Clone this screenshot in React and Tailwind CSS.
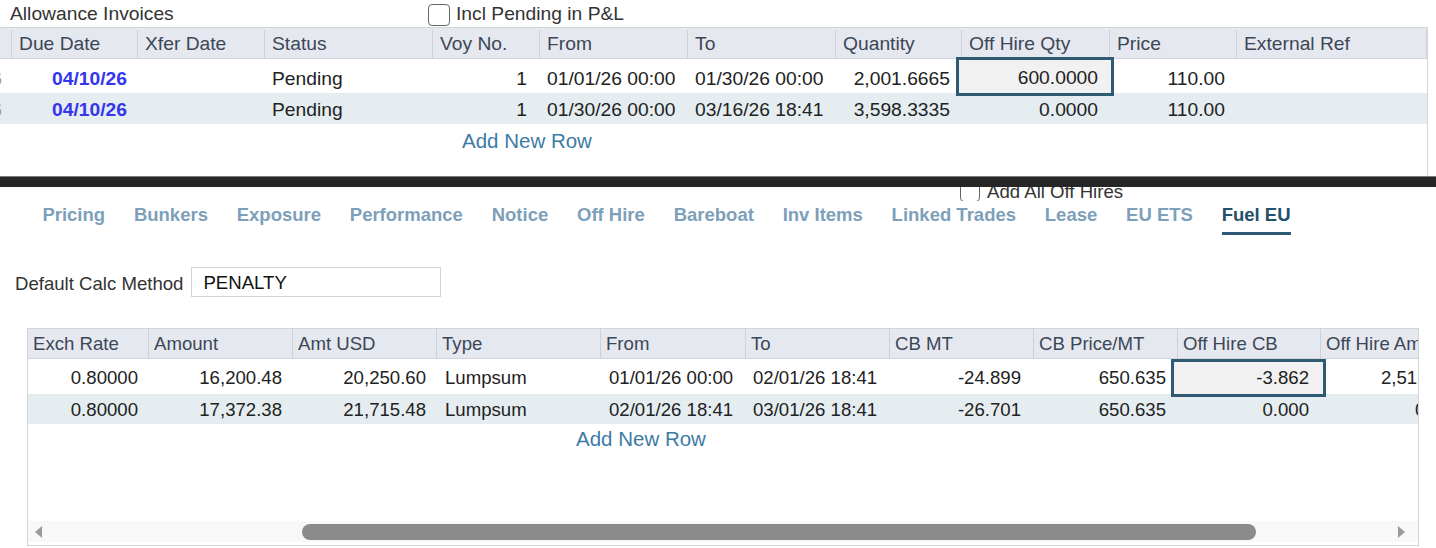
import React from "react";

const topCols = "grid-cols-[12px_126px_127px_168px_107px_148px_148px_126px_148px_127px_190px]";
const botCols = "grid-cols-[121px_144px_144px_164px_145px_144px_144px_144px_143px_150px]";

const topHeaders = ["", "Due Date", "Xfer Date", "Status", "Voy No.", "From", "To", "Quantity", "Off Hire Qty", "Price", "External Ref"];
const botHeaders = ["Exch Rate", "Amount", "Amt USD", "Type", "From", "To", "CB MT", "CB Price/MT", "Off Hire CB", "Off Hire Amount"];

const topRows = [
    { from: "01/01/26 00:00", to: "01/30/26 00:00", qty: "2,001.6665", off: "600.0000" },
    { from: "01/30/26 00:00", to: "03/16/26 18:41", qty: "3,598.3335", off: "0.0000" },
];

const botRows = [
    { amt: "16,200.48", usd: "20,250.60", from: "01/01/26 00:00", to: "02/01/26 18:41", cb: "-24.899", offCb: "-3.862", offAmt: "2,512.56", amtPad: "pl-[60px]" },
    { amt: "17,372.38", usd: "21,715.48", from: "02/01/26 18:41", to: "03/01/26 18:41", cb: "-26.701", offCb: "0.000", offAmt: "0.00", amtPad: "pl-[94px]" },
];

const tabs = ["Pricing", "Bunkers", "Exposure", "Performance", "Notice", "Off Hire", "Bareboat", "Inv Items", "Linked Trades", "Lease", "EU ETS", "Fuel EU"];

function Checkbox({ size = "w-[22px] h-[22px]" }) {
    return <span className={`${size} inline-block bg-white border border-[#666] rounded-[4px] shrink-0`} />;
}

function SelectedCell({ value, className }) {
    // focused cell: thick teal frame sitting over the grid lines
    return (
        <div className="relative">
            <div className={`absolute border-[3px] border-[#2f5a73] bg-[#f1f1f1] flex items-center justify-end ${className}`}>
                {value}
            </div>
        </div>
    );
}

function App() {
    return (
        <div className="w-[1436px] h-[548px] overflow-hidden bg-white text-[18.6px] text-[#222] font-['Liberation_Sans',Arial,sans-serif]">
            {/* Allowance Invoices */}
            <div className="h-[176px] flex flex-col text-[19.25px]">
                <div className="h-[27px] pt-[2px] flex items-center">
                    <div className="w-[428px] pl-[10px] text-[#333]">Allowance Invoices</div>
                    <Checkbox />
                    <span className="ml-[6px] text-[#333]">Incl Pending in P&amp;L</span>
                </div>
                <div className="w-[1428px] flex-1 border-r border-[#d3d7dd]">
                    <div className={`grid ${topCols} h-[32px] pt-[2px] bg-[#e6e8ef] border-y border-[#d0d4db] text-[#3b4757]`}>
                        {topHeaders.map((h, i) => (
                            <div key={i} className="border-r border-[#cdd1d8] pl-[7px] flex items-center whitespace-nowrap overflow-hidden">{h}</div>
                        ))}
                    </div>
                    {topRows.map((r, i) => (
                        <div key={i} className={`grid ${topCols} items-center whitespace-nowrap ${i === 0 ? "h-[34px] pt-[6px]" : "h-[31px] pt-[3px] bg-[#e5edf1]"}`}>
                            <div className="overflow-hidden flex justify-end pr-[10px] text-[#999]">04/10/26</div>
                            <div className="text-right pr-[11px] font-bold text-[#3535ee]">04/10/26</div>
                            <div />
                            <div className="pl-[7px]">Pending</div>
                            <div className="text-right pr-[13px]">1</div>
                            <div className="pl-[7px]">{r.from}</div>
                            <div className="pl-[7px]">{r.to}</div>
                            <div className="text-right pr-[12px]">{r.qty}</div>
                            {i === 0 ? (
                                <SelectedCell value={r.off} className="left-[-6px] right-[-4px] top-[-22px] h-[39px] pr-[13px] pt-[2px]" />
                            ) : (
                                <div className="text-right pr-[12px]">{r.off}</div>
                            )}
                            <div className="text-right pr-[12px]">110.00</div>
                            <div />
                        </div>
                    ))}
                    <div className="pl-[462px] pt-[2px] text-[20.5px] text-[#3d7ba6]">Add New Row</div>
                </div>
            </div>

            {/* splitter */}
            <div className="h-[11px] bg-[#262626] border-t border-[#7a7a7a]" />

            {/* Fuel EU panel */}
            <div className="h-[14px] overflow-hidden">
                <div className="flex items-center pl-[960px] mt-[-5px] leading-[20px]">
                    <Checkbox size="w-[20px] h-[20px]" />
                    <span className="ml-[7px] text-[#333]">Add All Off Hires</span>
                </div>
            </div>
            <div className="flex pl-[28px]">
                {tabs.map((t) => {
                    const active = t === "Fuel EU";
                    return (
                        <div key={t} className="flex flex-col px-[14.4px] pt-[3px]">
                            <span className={`h-[22px] leading-[22px] font-bold text-[18.5px] whitespace-nowrap ${active ? "text-[#24506b]" : "text-[#7d9fba]"}`}>{t}</span>
                            <span className={`mt-[6px] h-[3px] ${active ? "bg-[#2e5a75]" : ""}`} />
                        </div>
                    );
                })}
            </div>

            <div className="flex items-center mt-[32px] pl-[15px] h-[30px]">
                <span className="text-[#333] pt-[3px]">Default Calc Method</span>
                <div className="ml-[8px] w-[250px] h-[30px] border border-[#cfd4da] flex items-center pl-[11px] pt-[1px] text-[#111]">PENALTY</div>
            </div>

            <div className="ml-[27px] mt-[31px] w-[1392px] h-[218px] border border-[#d0d5dc] flex flex-col overflow-hidden">
                <div className={`grid ${botCols} h-[30px] shrink-0 bg-[#e6e8ef] border-b border-[#d0d4db] text-[#3b4757]`}>
                    {botHeaders.map((h) => (
                        <div key={h} className="border-r border-[#cdd1d8] pl-[5px] flex items-center whitespace-nowrap overflow-hidden">{h}</div>
                    ))}
                </div>
                {botRows.map((r, i) => (
                    <div key={i} className={`grid ${botCols} shrink-0 items-center whitespace-nowrap ${i === 0 ? "h-[35px] pt-[3px]" : "h-[30px] pt-[1px] bg-[#e5edf1]"}`}>
                        <div className="text-right pr-[11px]">0.80000</div>
                        <div className="text-right pr-[11px]">{r.amt}</div>
                        <div className="text-right pr-[11px]">{r.usd}</div>
                        <div className="pl-[8px]">Lumpsum</div>
                        <div className="pl-[8px]">{r.from}</div>
                        <div className="pl-[7px]">{r.to}</div>
                        <div className="text-right pr-[13px]">{r.cb}</div>
                        <div className="text-right pr-[12px]">650.635</div>
                        {i === 0 ? (
                            <SelectedCell value={r.offCb} className="left-[-7px] right-[-5px] top-[-19px] h-[38px] pr-[14px]" />
                        ) : (
                            <div className="text-right pr-[12px]">{r.offCb}</div>
                        )}
                        <div className={r.amtPad}>{r.offAmt}</div>
                    </div>
                ))}
                <div className="pl-[548px] text-[20.5px] text-[#3d7ba6]">Add New Row</div>
                <div className="flex-1" />
                <div className="h-[21px] mb-[3px] bg-[#f8f8f8] flex items-center shrink-0">
                    <svg width="8" height="12" viewBox="0 0 8 12" className="ml-[7px]">
                        <path d="M7 0 L0 6 L7 12 Z" fill="#9a9a9a" />
                    </svg>
                    <div className="ml-[259px] w-[954px] h-[16px] rounded-full bg-[#8b8b8b]" />
                    <svg width="8" height="12" viewBox="0 0 8 12" className="ml-[141px]">
                        <path d="M1 0 L8 6 L1 12 Z" fill="#9a9a9a" />
                    </svg>
                </div>
            </div>
        </div>
    );
}

export default App;
